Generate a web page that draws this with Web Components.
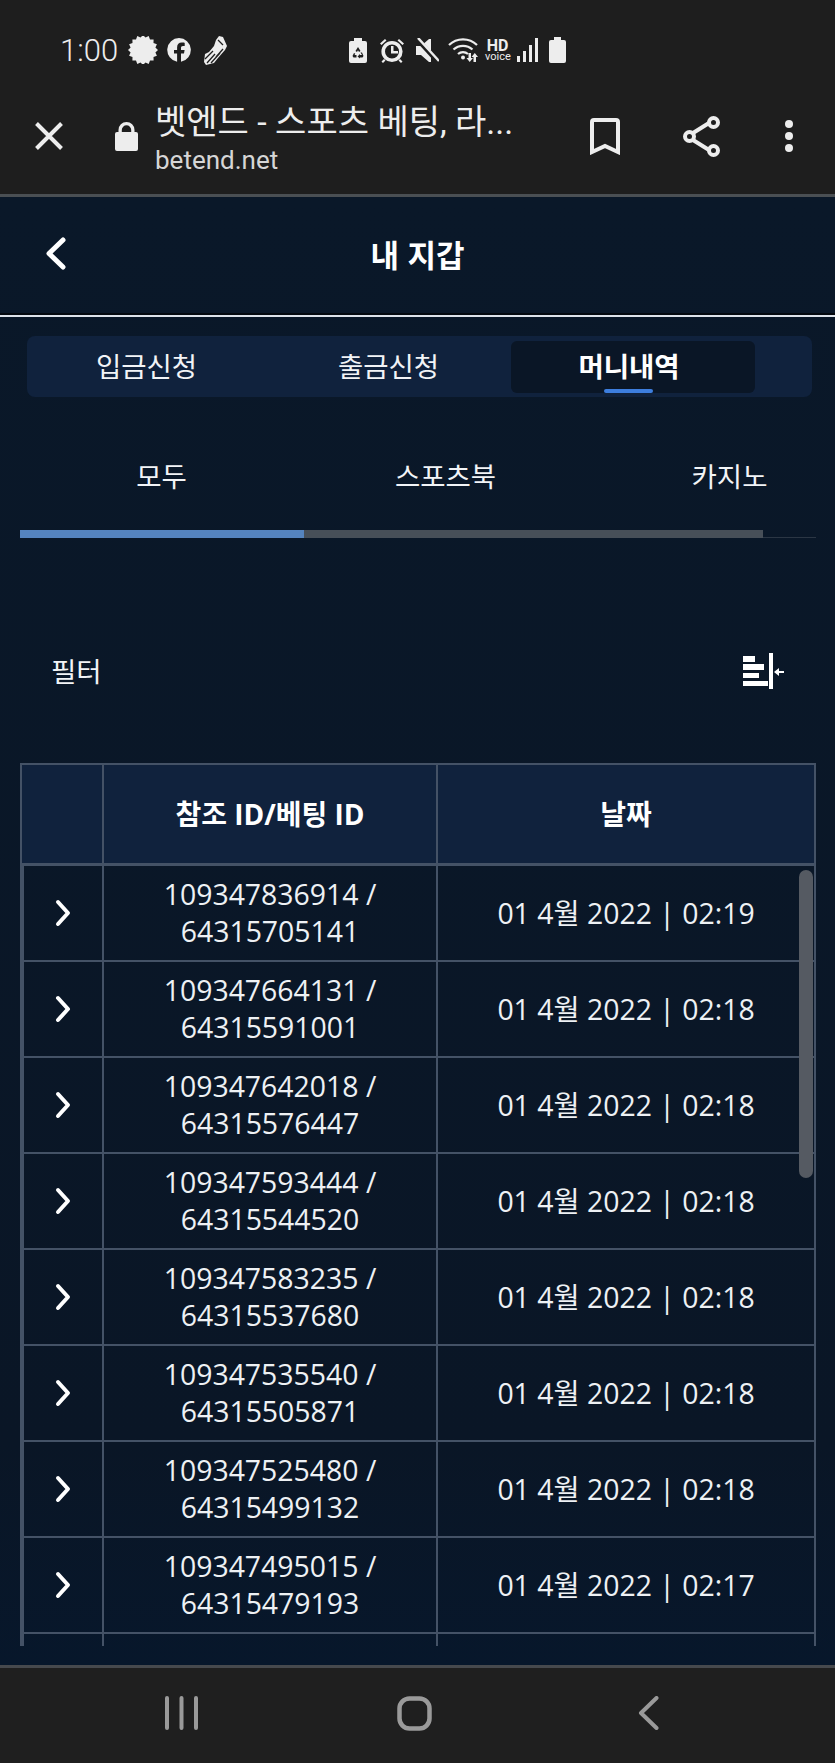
<!DOCTYPE html>
<html lang="ko">
<head>
<meta charset="utf-8">
<title>내 지갑</title>
<style>
	html, body {
		margin: 0;
		background: #0a1626;
	}
	body {
		width: 835px;
		height: 1763px;
		overflow: hidden;
		display: flex;
		flex-direction: column;
		font-family: "Open Sans", "Noto Sans CJK KR", sans-serif;
		color: #fff;
	}
	wallet-page {
		flex: 1;
		min-height: 0;
	}
</style>
</head>
<body>
	<status-bar></status-bar>
	<browser-bar title="벳엔드 - 스포츠 베팅, 라..." host="betend.net"></browser-bar>
	<wallet-page>
		<page-header>내 지갑</page-header>
		<tab-strip>
			<strip-tab>입금신청</strip-tab>
			<strip-tab>출금신청</strip-tab>
			<strip-tab active>머니내역</strip-tab>
		</tab-strip>
		<sub-tabs>
			<sub-tab>모두</sub-tab>
			<sub-tab>스포츠북</sub-tab>
			<sub-tab>카지노</sub-tab>
		</sub-tabs>
		<filter-row>필터</filter-row>
		<money-table>
			<money-row ref-id="109347836914" bet-id="64315705141" date="01 4월 2022 | 02:19"></money-row>
			<money-row ref-id="109347664131" bet-id="64315591001" date="01 4월 2022 | 02:18"></money-row>
			<money-row ref-id="109347642018" bet-id="64315576447" date="01 4월 2022 | 02:18"></money-row>
			<money-row ref-id="109347593444" bet-id="64315544520" date="01 4월 2022 | 02:18"></money-row>
			<money-row ref-id="109347583235" bet-id="64315537680" date="01 4월 2022 | 02:18"></money-row>
			<money-row ref-id="109347535540" bet-id="64315505871" date="01 4월 2022 | 02:18"></money-row>
			<money-row ref-id="109347525480" bet-id="64315499132" date="01 4월 2022 | 02:18"></money-row>
			<money-row ref-id="109347495015" bet-id="64315479193" date="01 4월 2022 | 02:17"></money-row>
			<money-row></money-row>
		</money-table>
	</wallet-page>
	<nav-bar></nav-bar>

<script>
function define(name, html, setup) {
	customElements.define(name, class extends HTMLElement {
		constructor() {
			super();
			this.attachShadow({mode: "open"}).innerHTML = html;
		}
		connectedCallback() {
			if (setup) setup.call(this, this.shadowRoot);
		}
	});
}

const burst = [];
for (let i = 0; i < 32; i++) {
	const r = i % 2 ? 12.6 : 15;
	const a = Math.PI * i / 16;
	burst.push((15 + r * Math.cos(a)).toFixed(1) + "," + (14 + r * Math.sin(a)).toFixed(1));
}

define("status-bar", `
	<style>
		:host {
			display: flex;
			align-items: center;
			height: 90px;
			padding: 10px 0 0 60px;
			box-sizing: border-box;
			background: #1e1e1e;
			color: #ededed;
		}
		svg { display: block; flex: none; fill: currentColor; }
		.time { font: 300 31px/1 Roboto, sans-serif; width: 57px; white-space: nowrap; }
		.hd {
			width: 25px;
			margin-left: 5px;
			font-family: Roboto, sans-serif;
			text-align: center;
			flex: none;
		}
		.hd b { display: block; font-size: 16px; line-height: 13px; font-weight: 700; }
		.hd span { display: block; font-size: 11px; line-height: 9px; }
	</style>
	<span class="time">1:00</span>
	<svg style="margin-left:11px" width="30" height="28" viewBox="0 0 30 28"><polygon points="${burst.join(" ")}"/></svg>
	<svg style="margin-left:9px" width="24" height="24" viewBox="0 0 24 24"><path fill-rule="evenodd" d="M12 0a12 12 0 0 1 2 23.8V15.5h3l.6-3.5H14V9.8c0-1 .5-1.9 2-1.9h1.700V4.900S16.200 4.600 14.800 4.600c-2.900 0-4.700 1.700-4.700 4.800V12H7v3.500h3.100v8.300A12 12 0 0 1 12 0z"/></svg>
	<svg style="margin-left:13px" width="23" height="29" viewBox="0 0 23 29"><path d="M15 0l4 1 4 9-2 4-7 8-4 5-8 2-2-3 1-8 4-2 5-6 2-6z"/><path d="M3 27l8-9M1 23l8-8M7 27l9-10M12 21l7-8M14 4l5 5" stroke="#1e1e1e" stroke-width="1.300" fill="none"/></svg>
	<svg style="margin-left:122px" width="18" height="25" viewBox="0 0 18 25"><path d="M5 0h8v3h3a2 2 0 0 1 2 2v18a2 2 0 0 1-2 2H2a2 2 0 0 1-2-2V5a2 2 0 0 1 2-2h3z"/><path d="M9 9l-2.500 4 1.500 1 1-1.700 1 1.700 1.500-1zM5 15l-1.500 3 1 1.500h3V17H5.500l.8-1.200zM11.500 14.500l1.500 2.500h-2v-1l-2.500 2.500 2.500 2v-1h2.500l1-1.500-1.500-3.500z" fill="#1e1e1e"/></svg>
	<svg style="margin-left:12px" width="26" height="25" viewBox="0 0 26 25"><circle cx="13" cy="13.500" r="8.800" fill="none" stroke="currentColor" stroke-width="3.600"/><path d="M12 8h2.500v5H19v2.500h-7zM1 5.500L6 1l1.500 1.500-5 4.500zM25 5.500L20 1l-1.500 1.500 5 4.500zM5 21l-2.500 2.500L4 25l2.500-2.500zM21 21l2.500 2.500L22 25l-2.500-2.500z"/></svg>
	<svg style="margin-left:11px" width="23" height="25" viewBox="0 0 23 25"><path d="M0 8h5l8-7h2v23h-2l-8-7H0z"/><path d="M1 1l21 23" stroke="#1e1e1e" stroke-width="4.500" fill="none"/><path d="M2 0l21 23" stroke="currentColor" stroke-width="2.500" fill="none"/></svg>
	<svg style="margin-left:9px" width="32" height="24" viewBox="0 0 32 24"><g fill="none" stroke="currentColor" stroke-width="2.200"><path d="M1 7a20 20 0 0 1 28 0"/><path d="M5.500 11.500a14 14 0 0 1 19 0"/><path d="M10 16a7.500 7.500 0 0 1 10 0"/></g><circle cx="15" cy="19.500" r="2"/><path d="M20.500 15h2.500v5h2l-3.300 4-3.200-4h2zM28 19v5h-2.500v-5h-2l3.300-4 3.200 4z"/></svg>
	<div class="hd"><b>HD</b><span>voice</span></div>
	<svg style="margin-left:7px" width="21" height="24" viewBox="0 0 21 24"><rect x="0" y="18" width="3" height="6"/><rect x="6" y="13" width="3" height="11"/><rect x="12" y="7" width="3" height="17"/><rect x="18" y="0" width="3" height="24"/></svg>
	<svg style="margin-left:11px" width="17" height="26" viewBox="0 0 17 26"><path d="M5 0h7v3h3a2 2 0 0 1 2 2v19a2 2 0 0 1-2 2H2a2 2 0 0 1-2-2V5a2 2 0 0 1 2-2h3z"/></svg>
`);

define("browser-bar", `
	<style>
		:host {
			display: flex;
			align-items: center;
			height: 107px;
			box-sizing: border-box;
			padding: 0 0 7px 35px;
			background: #1e1e1e;
			border-bottom: 3px solid #4a4f53;
			color: #ededed;
		}
		svg { display: block; flex: none; }
		.close { margin-top: -5px; }
		.lock { margin: -5px 0 0 52px; }
		.text {
			width: 372px;
			margin: 2.500px 0 0 17px;
			flex: none;
			white-space: nowrap;
		}
		.title { font: 34px/34px Roboto, "Noto Sans CJK KR", sans-serif; }
		.host { font: 26px/30px Roboto, sans-serif; color: #d6d6d6; margin-top: 6.500px; }
		.book { margin: -5px 0 0 63px; }
		.share { margin: -5px 0 0 63px; }
		.more { margin: -5px 0 0 65px; }
	</style>
	<svg class="close" width="28" height="28" viewBox="0 0 28 28" fill="none" stroke="currentColor" stroke-width="4"><path d="M1.500 1.500l25 25M26.500 1.500l-25 25"/></svg>
	<svg class="lock" width="23" height="29" viewBox="0 0 23 29"><path fill="currentColor" d="M3.500 10V8a8 8 0 0 1 16 0v2H21a2 2 0 0 1 2 2v15a2 2 0 0 1-2 2H2a2 2 0 0 1-2-2V12a2 2 0 0 1 2-2zM6.800 10h9.400V8a4.700 4.700 0 0 0-9.400 0z"/></svg>
	<div class="text">
		<div class="title"></div>
		<div class="host"></div>
	</div>
	<svg class="book" width="30" height="37" viewBox="0 0 30 37" fill="none" stroke="currentColor" stroke-width="4"><path d="M2 34V4a2 2 0 0 1 2-2h22a2 2 0 0 1 2 2v30l-13-6z"/></svg>
	<svg class="share" width="37" height="41" viewBox="0 0 37 41" fill="none" stroke="currentColor" stroke-width="4"><path d="M10 17l16-10M10 24l16 10"/><circle cx="6.500" cy="20.500" r="4.500"/><circle cx="30.500" cy="6.500" r="4.500"/><circle cx="30.500" cy="34.500" r="4.500"/></svg>
	<svg class="more" width="8" height="32" viewBox="0 0 8 32" fill="currentColor"><circle cx="4" cy="4" r="4"/><circle cx="4" cy="16" r="4"/><circle cx="4" cy="28" r="4"/></svg>
`, function (root) {
	root.querySelector(".title").textContent = this.getAttribute("title");
	root.querySelector(".host").textContent = this.getAttribute("host");
});

define("wallet-page", `
	<style>
		:host {
			display: flex;
			flex-direction: column;
			background: linear-gradient(#0a1829, #0a1626 85%, #07172b);
			overflow: hidden;
		}
	</style>
	<slot></slot>
`);

define("page-header", `
	<style>
		:host {
			display: flex;
			align-items: center;
			justify-content: center;
			position: relative;
			height: 120px;
			box-sizing: border-box;
			padding-bottom: 5px;
			border-bottom: 2px solid #dde3ea;
			box-shadow: inset 0 -2px 0 #04090f;
			font: 700 31px/1 "Noto Sans CJK KR", sans-serif;
		}
		svg { position: absolute; left: 45px; top: 40px; }
	</style>
	<svg width="22" height="33" viewBox="0 0 22 33" fill="none" stroke="#fff" stroke-width="5" stroke-linecap="round" stroke-linejoin="round"><path d="M18 3L4 16.500 18 30"/></svg>
	<span><slot></slot></span>
`);

define("tab-strip", `
	<style>
		:host {
			display: grid;
			grid-template-columns: 243px 241px 244px;
			align-items: stretch;
			height: 61px;
			box-sizing: border-box;
			margin: 19px 23px 0 27px;
			padding: 5px 0 4px 0;
			background: #10223d;
			border-radius: 8px;
		}
	</style>
	<slot></slot>
`);

define("strip-tab", `
	<style>
		:host {
			display: flex;
			align-items: center;
			justify-content: center;
			position: relative;
			font: 27.500px/1 "Noto Sans CJK KR", sans-serif;
			color: #f2f4f7;
			border-radius: 6px;
			padding: 0 4px 2px 0;
		}
		:host([active]) {
			background: #0a1626;
			font-weight: 700;
			color: #fff;
			padding-right: 8px;
		}
		:host([active])::after {
			content: "";
			position: absolute;
			left: 93px;
			bottom: 0;
			width: 49px;
			height: 4px;
			background: #3d7ede;
			border-radius: 2px;
		}
	</style>
	<slot></slot>
`);

define("sub-tabs", `
	<style>
		:host {
			display: block;
			margin: 0 19px 0 20px;
			overflow: hidden;
			height: 142px;
			position: relative;
		}
		.row {
			display: grid;
			grid-template-columns: repeat(3, 284px);
			width: 852px;
			height: 133px;
			align-items: center;
			box-sizing: border-box;
			padding-top: 24px;
		}
		.track {
			position: absolute;
			left: 0;
			right: 0;
			bottom: 1px;
			height: 1px;
			background: #2b3644;
		}
		.bar {
			position: absolute;
			left: 0;
			top: 133px;
			width: 743px;
			height: 8px;
			background: #474f58;
		}
		.fill {
			width: 284px;
			height: 100%;
			background: #5584bf;
		}
	</style>
	<div class="row"><slot></slot></div>
	<div class="track"></div>
	<div class="bar"><div class="fill"></div></div>
`);

define("sub-tab", `
	<style>
		:host {
			display: block;
			text-align: center;
			font: 27.500px/1 "Noto Sans CJK KR", sans-serif;
			color: #f2f4f7;
			padding-right: 1px;
		}
	</style>
	<slot></slot>
`);

define("filter-row", `
	<style>
		:host {
			display: flex;
			align-items: center;
			justify-content: space-between;
			height: 224px;
			box-sizing: border-box;
			padding: 39px 51px 0 51px;
			font: 27.500px/1 "Noto Sans CJK KR", sans-serif;
			color: #f2f4f7;
		}
		svg { display: block; fill: #fff; }
	</style>
	<span><slot></slot></span>
	<svg width="41" height="36" viewBox="0 0 41 36">
		<rect x="0" y="3" width="12" height="6"/>
		<rect x="0" y="11" width="21" height="6"/>
		<rect x="0" y="20" width="16" height="5"/>
		<rect x="0" y="28" width="25" height="5"/>
		<rect x="26" y="0" width="4" height="36"/>
		<path d="M31 19l5-4v3h5v2h-5v3z"/>
	</svg>
`);

define("money-table", `
	<style>
		:host {
			display: block;
			position: relative;
			height: 883px;
			margin: 0 19px 0 20px;
			overflow: hidden;
			color: #eef1f4;
		}
		.head {
			display: grid;
			grid-template-columns: 80px 334px 1fr;
			height: 103px;
			box-sizing: border-box;
			border: 2px solid #445266;
			border-bottom-width: 3px;
			background: #10223d;
			font: 700 28px/1 "Open Sans", "Noto Sans CJK KR", sans-serif;
			color: #fff;
		}
		.head div {
			display: flex;
			align-items: center;
			justify-content: center;
			border-left: 2px solid #445266;
		}
		.head div:first-child { border-left: 0; }
		.thumb {
			position: absolute;
			right: 3px;
			top: 107px;
			width: 14px;
			height: 308px;
			border-radius: 7px;
			background: #555a62;
		}
	</style>
	<div class="head">
		<div></div>
		<div>참조 ID/베팅 ID</div>
		<div>날짜</div>
	</div>
	<slot></slot>
	<div class="thumb"></div>
`);

define("money-row", `
	<style>
		:host {
			display: grid;
			grid-template-columns: 80px 334px 1fr;
			height: 96px;
			box-sizing: border-box;
			border: solid #445266;
			border-width: 0 2px 2px 2px;
			font: 28.400px/37px "Open Sans", "Noto Sans CJK KR", sans-serif;
		}
		div {
			display: flex;
			align-items: center;
			justify-content: center;
			text-align: center;
			border-left: 2px solid #445266;
		}
		div:first-child { border-left: 0; }
		svg { display: block; }
		.ids { padding: 0 20px; }
	</style>
	<div class="icon"></div>
	<div class="ids"></div>
	<div class="date"></div>
`, function (root) {
	if (!this.hasAttribute("ref-id")) return;
	root.querySelector(".icon").innerHTML = `<svg width="18" height="28" viewBox="0 0 18 28" fill="none" stroke="#fff" stroke-width="4" stroke-linecap="round" stroke-linejoin="round"><path d="M4 3l10 11L4 25"/></svg>`;
	root.querySelector(".ids").textContent = this.getAttribute("ref-id") + " / " + this.getAttribute("bet-id");
	root.querySelector(".date").textContent = this.getAttribute("date");
});

define("nav-bar", `
	<style>
		:host {
			position: relative;
			height: 98px;
			box-sizing: border-box;
			border-top: 3px solid #46494d;
			background: #1f1f1f;
			display: grid;
			grid-template-columns: 165px 33px 199px 35px 206px 21px;
			padding-top: 28px;
			align-items: start;
			color: #9a9a9a;
		}
		svg { display: block; grid-row: 1; }
	</style>
	<svg style="grid-column:2" width="33" height="34" viewBox="0 0 33 34" fill="none" stroke="currentColor" stroke-width="4" stroke-linecap="round"><path d="M2 2v30M16.500 2v30M31 2v30"/></svg>
	<svg style="grid-column:4" width="35" height="35" viewBox="0 0 35 35" fill="none" stroke="currentColor" stroke-width="4.500"><rect x="2.500" y="2.500" width="30" height="30" rx="10"/></svg>
	<svg style="grid-column:6" width="21" height="34" viewBox="0 0 21 34" fill="none" stroke="currentColor" stroke-width="4" stroke-linecap="round" stroke-linejoin="round"><path d="M18.500 2L3 17l15.500 15"/></svg>
`);
</script>
</body>
</html>
